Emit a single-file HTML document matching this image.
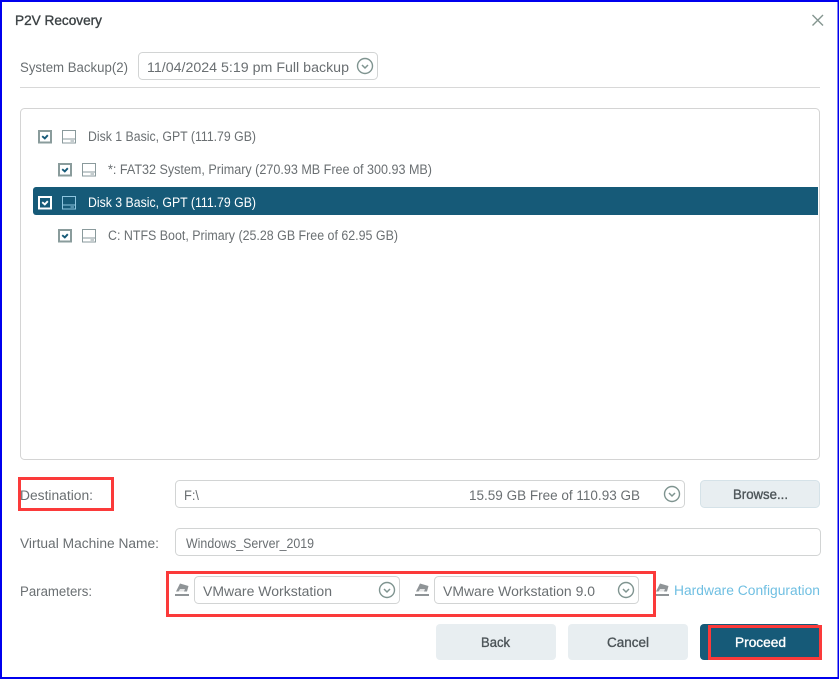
<!DOCTYPE html>
<html>
<head>
<meta charset="utf-8">
<style>
html,body{margin:0;padding:0;background:#fff;width:839px;height:679px;overflow:hidden}
svg{display:block}
text{font-family:"Liberation Sans",sans-serif;font-size:13.5px;fill:#6a6f72}
.m{stroke-width:.35px}
</style>
</head>
<body>
<svg width="839" height="679" viewBox="0 0 839 679" xmlns="http://www.w3.org/2000/svg">
<defs>
<g id="chev"><circle cx="0" cy="0" r="7.5" fill="none" stroke="#7f9490" stroke-width="1.4"/><path d="M-3 -1L0 2L3 -1" fill="none" stroke="#7f9490" stroke-width="1.5"/></g>
<g id="chk"><rect x="1" y="1" width="12" height="11.5" fill="#fff" stroke="#8a9c9c" stroke-width="2"/><path d="M4.2 6.2L6.8 8.4L9.8 5.2" fill="none" stroke="#165a78" stroke-width="1.9"/></g>
<g id="chkw"><rect x="1" y="1" width="12" height="11.5" fill="#165a78" stroke="#fff" stroke-width="2"/><path d="M4.2 6.2L6.8 8.4L9.8 5.2" fill="none" stroke="#fff" stroke-width="1.9"/></g>
<g id="disk"><rect x="0.5" y="0.5" width="13" height="12.5" fill="none" stroke="#8a9a9c" stroke-width="1"/><path d="M0.5 9H13.5M8.5 11H12" fill="none" stroke="#8a9a9c" stroke-width="1"/></g>
<g id="diskw"><rect x="0.5" y="0.5" width="13" height="12.5" fill="none" stroke="#8fc6e0" stroke-width="1"/><path d="M0.5 9H13.5M8.5 11H12" fill="none" stroke="#8fc6e0" stroke-width="1"/></g>
<g id="eras"><path d="M1 8.5L5 0.5L13.5 3L12 8.5Z" fill="#8f9497"/><path d="M3.5 8.5L5 6H10L9 8.5Z" fill="#e4e5e6"/><rect x="0" y="11" width="14" height="2" fill="#8f9497"/></g>
</defs>

<rect x="0" y="0" width="839" height="679" fill="#0000ee"/>
<rect x="2" y="2" width="835.5" height="675" fill="#fff"/>

<text class="m" x="15" y="25" textLength="87" lengthAdjust="spacingAndGlyphs" style="fill:#3c4245;stroke:#3c4245">P2V Recovery</text>
<path d="M812.5 15L823 25.5M823 15L812.5 25.5" stroke="#84958f" stroke-width="1.4" fill="none"/>

<text x="20" y="72" textLength="108" lengthAdjust="spacingAndGlyphs">System Backup(2)</text>
<rect x="138.5" y="52.5" width="239" height="27" rx="4" fill="#fff" stroke="#d2d4d4"/>
<text x="147" y="72" textLength="202" lengthAdjust="spacingAndGlyphs">11/04/2024 5:19 pm Full backup</text>
<use href="#chev" x="365" y="66"/>
<rect x="20" y="87" width="800" height="1" fill="#d8d8d8"/>

<rect x="20.5" y="108.5" width="799" height="351" rx="4" fill="#fff" stroke="#d4d4d4"/>

<use href="#chk" x="38" y="130"/>
<use href="#disk" x="62" y="130"/>
<text x="88" y="141" textLength="168" lengthAdjust="spacingAndGlyphs">Disk 1 Basic, GPT (111.79 GB)</text>

<use href="#chk" x="58" y="163"/>
<use href="#disk" x="82" y="163"/>
<text x="108" y="174" textLength="324" lengthAdjust="spacingAndGlyphs">*: FAT32 System, Primary (270.93 MB Free of 300.93 MB)</text>

<path d="M36 187H818V215H36A3 3 0 0 1 33 212V190A3 3 0 0 1 36 187Z" fill="#165a78"/>
<use href="#chkw" x="38" y="196"/>
<use href="#diskw" x="62" y="196"/>
<text x="88" y="207" textLength="168" lengthAdjust="spacingAndGlyphs" style="fill:#fff">Disk 3 Basic, GPT (111.79 GB)</text>

<use href="#chk" x="58" y="229"/>
<use href="#disk" x="82" y="229"/>
<text x="108" y="240" textLength="290" lengthAdjust="spacingAndGlyphs">C: NTFS Boot, Primary (25.28 GB Free of 62.95 GB)</text>

<text x="20" y="500" textLength="73" lengthAdjust="spacingAndGlyphs">Destination:</text>
<rect x="175.5" y="480.5" width="509" height="27" rx="4" fill="#fff" stroke="#d2d4d4"/>
<text x="184" y="500" textLength="15" lengthAdjust="spacingAndGlyphs">F:\</text>
<text x="469" y="500" textLength="171" lengthAdjust="spacingAndGlyphs">15.59 GB Free of 110.93 GB</text>
<use href="#chev" x="672" y="494"/>
<rect x="700.5" y="480.5" width="119" height="27" rx="4" fill="#e8eef1" stroke="#d5e2e8" stroke-width="1"/>
<text class="m" x="733" y="499" textLength="55" lengthAdjust="spacingAndGlyphs" style="fill:#4c5458;stroke:#4c5458">Browse...</text>

<text x="20" y="548" textLength="139" lengthAdjust="spacingAndGlyphs">Virtual Machine Name:</text>
<rect x="175.5" y="528.5" width="645" height="27" rx="4" fill="#fff" stroke="#d2d4d4"/>
<text x="186" y="548" textLength="128" lengthAdjust="spacingAndGlyphs">Windows_Server_2019</text>

<text x="20" y="596" textLength="72" lengthAdjust="spacingAndGlyphs">Parameters:</text>
<use href="#eras" x="175" y="583"/>
<rect x="194.5" y="576.5" width="205" height="27" rx="4" fill="#fff" stroke="#d2d4d4"/>
<text x="203" y="596" textLength="129" lengthAdjust="spacingAndGlyphs">VMware Workstation</text>
<use href="#chev" x="387" y="590"/>
<use href="#eras" x="415" y="583"/>
<rect x="434.5" y="576.5" width="204" height="27" rx="4" fill="#fff" stroke="#d2d4d4"/>
<text x="443" y="596" textLength="152" lengthAdjust="spacingAndGlyphs">VMware Workstation 9.0</text>
<use href="#chev" x="626" y="590"/>
<use href="#eras" x="655" y="583"/>
<text x="674" y="595" textLength="146" lengthAdjust="spacingAndGlyphs" style="fill:#6fbfe2">Hardware Configuration</text>

<rect x="436" y="624" width="120" height="36" rx="4" fill="#e8eef1"/>
<text class="m" x="481" y="647" textLength="29" lengthAdjust="spacingAndGlyphs" style="fill:#4c5458;stroke:#4c5458">Back</text>
<rect x="568" y="624" width="120" height="36" rx="4" fill="#e8eef1"/>
<text class="m" x="607" y="647" textLength="42" lengthAdjust="spacingAndGlyphs" style="fill:#4c5458;stroke:#4c5458">Cancel</text>
<rect x="700" y="624" width="120" height="36" rx="4" fill="#165a78"/>
<text class="m" x="735" y="647" textLength="51" lengthAdjust="spacingAndGlyphs" style="fill:#fff;stroke:#fff">Proceed</text>

<rect x="19.5" y="478.5" width="93" height="31" fill="none" stroke="#fb3a3a" stroke-width="3"/>
<rect x="167.5" y="572.5" width="487" height="43" fill="none" stroke="#fb3a3a" stroke-width="3"/>
<rect x="709.5" y="626.5" width="111" height="32" fill="none" stroke="#fb3a3a" stroke-width="3"/>
</svg>
</body>
</html>
